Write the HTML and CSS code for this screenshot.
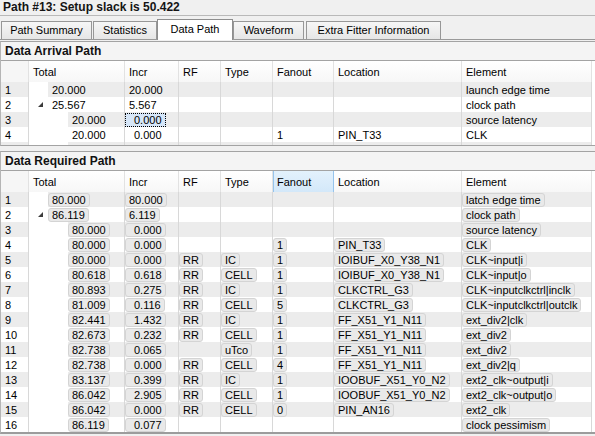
FILE: index.html
```html
<!DOCTYPE html>
<html>
<head>
<meta charset="utf-8">
<title>Path #13</title>
<link rel="stylesheet" href="styles.css">
</head>
<body>
<div class="title">Path #13: Setup slack is 50.422</div>
<div class="tabbar">
  <div class="tab t1">Path Summary</div>
  <div class="tab t2">Statistics</div>
  <div class="tab sel t3">Data Path</div>
  <div class="tab t4">Waveform</div>
  <div class="tab t5">Extra Fitter Information</div>
</div>

<div class="sec s1">
  <div class="shead">Data Arrival Path</div>
  <div class="tbl">
    <div class="row hdr"><div class="c n"></div><div class="c">Total</div><div class="c">Incr</div><div class="c">RF</div><div class="c">Type</div><div class="c">Fanout</div><div class="c">Location</div><div class="c">Element</div><div class="c f"></div></div>
    <div class="row g"><div class="c n">1</div><div class="c t"><i class="ind l0"></i><span class="x">20.000</span></div><div class="c"><span class="x">20.000</span></div><div class="c"></div><div class="c"></div><div class="c"></div><div class="c"></div><div class="c"><span class="x">launch edge time</span></div><div class="c f"></div></div>
    <div class="row"><div class="c n">2</div><div class="c t"><i class="ind l0"><svg class="tri" width="5" height="5" viewBox="0 0 5 5"><polygon points="0,5 5,0 5,5" fill="#3c3c3c"/></svg></i><span class="x">25.567</span></div><div class="c"><span class="x">5.567</span></div><div class="c"></div><div class="c"></div><div class="c"></div><div class="c"></div><div class="c"><span class="x">clock path</span></div><div class="c f"></div></div>
    <div class="row g"><div class="c n">3</div><div class="c t"><i class="ind l1"></i><span class="x">20.000</span></div><div class="c"><span class="fo">0.000</span></div><div class="c"></div><div class="c"></div><div class="c"></div><div class="c"></div><div class="c"><span class="x">source latency</span></div><div class="c f"></div></div>
    <div class="row"><div class="c n">4</div><div class="c t"><i class="ind l1"></i><span class="x">20.000</span></div><div class="c"><span class="x s">0.000</span></div><div class="c"></div><div class="c"></div><div class="c"><span class="x">1</span></div><div class="c"><span class="x">PIN_T33</span></div><div class="c"><span class="x">CLK</span></div><div class="c f"></div></div>
    <div class="row g part"><div class="c n"></div><div class="c t"><i class="ind l1"></i></div><div class="c"></div><div class="c"></div><div class="c"></div><div class="c"></div><div class="c"></div><div class="c"></div><div class="c f"></div></div>
  </div>
</div>

<div class="sec s2">
  <div class="shead">Data Required Path</div>
  <div class="tbl">
    <div class="row hdr"><div class="c n"></div><div class="c">Total</div><div class="c">Incr</div><div class="c">RF</div><div class="c">Type</div><div class="c hot">Fanout</div><div class="c">Location</div><div class="c">Element</div><div class="c f"></div></div>
    <div class="row g"><div class="c n">1</div><div class="c t"><i class="ind l0"></i><span class="k">80.000</span></div><div class="c"><span class="k">80.000</span></div><div class="c"></div><div class="c"></div><div class="c"></div><div class="c"></div><div class="c"><span class="k">latch edge time</span></div><div class="c f"></div></div>
    <div class="row"><div class="c n">2</div><div class="c t"><i class="ind l0"><svg class="tri" width="5" height="5" viewBox="0 0 5 5"><polygon points="0,5 5,0 5,5" fill="#3c3c3c"/></svg></i><span class="k">86.119</span></div><div class="c"><span class="k">6.119</span></div><div class="c"></div><div class="c"></div><div class="c"></div><div class="c"></div><div class="c"><span class="k">clock path</span></div><div class="c f"></div></div>
    <div class="row g"><div class="c n">3</div><div class="c t"><i class="ind l1"></i><span class="k">80.000</span></div><div class="c"><span class="k s">0.000</span></div><div class="c"></div><div class="c"></div><div class="c"></div><div class="c"></div><div class="c"><span class="k">source latency</span></div><div class="c f"></div></div>
    <div class="row"><div class="c n">4</div><div class="c t"><i class="ind l1"></i><span class="k">80.000</span></div><div class="c"><span class="k s">0.000</span></div><div class="c"></div><div class="c"></div><div class="c"><span class="k">1</span></div><div class="c"><span class="k">PIN_T33</span></div><div class="c"><span class="k">CLK</span></div><div class="c f"></div></div>
    <div class="row g"><div class="c n">5</div><div class="c t"><i class="ind l1"></i><span class="k">80.000</span></div><div class="c"><span class="k s">0.000</span></div><div class="c"><span class="k">RR</span></div><div class="c"><span class="k">IC</span></div><div class="c"><span class="k">1</span></div><div class="c"><span class="k">IOIBUF_X0_Y38_N1</span></div><div class="c"><span class="k">CLK~input|i</span></div><div class="c f"></div></div>
    <div class="row"><div class="c n">6</div><div class="c t"><i class="ind l1"></i><span class="k">80.618</span></div><div class="c"><span class="k s">0.618</span></div><div class="c"><span class="k">RR</span></div><div class="c"><span class="k">CELL</span></div><div class="c"><span class="k">1</span></div><div class="c"><span class="k">IOIBUF_X0_Y38_N1</span></div><div class="c"><span class="k">CLK~input|o</span></div><div class="c f"></div></div>
    <div class="row g"><div class="c n">7</div><div class="c t"><i class="ind l1"></i><span class="k">80.893</span></div><div class="c"><span class="k s">0.275</span></div><div class="c"><span class="k">RR</span></div><div class="c"><span class="k">IC</span></div><div class="c"><span class="k">1</span></div><div class="c"><span class="k">CLKCTRL_G3</span></div><div class="c"><span class="k">CLK~inputclkctrl|inclk</span></div><div class="c f"></div></div>
    <div class="row"><div class="c n">8</div><div class="c t"><i class="ind l1"></i><span class="k">81.009</span></div><div class="c"><span class="k s">0.116</span></div><div class="c"><span class="k">RR</span></div><div class="c"><span class="k">CELL</span></div><div class="c"><span class="k">5</span></div><div class="c"><span class="k">CLKCTRL_G3</span></div><div class="c"><span class="k">CLK~inputclkctrl|outclk</span></div><div class="c f"></div></div>
    <div class="row g"><div class="c n">9</div><div class="c t"><i class="ind l1"></i><span class="k">82.441</span></div><div class="c"><span class="k s">1.432</span></div><div class="c"><span class="k">RR</span></div><div class="c"><span class="k">IC</span></div><div class="c"><span class="k">1</span></div><div class="c"><span class="k">FF_X51_Y1_N11</span></div><div class="c"><span class="k">ext_div2|clk</span></div><div class="c f"></div></div>
    <div class="row"><div class="c n">10</div><div class="c t"><i class="ind l1"></i><span class="k">82.673</span></div><div class="c"><span class="k s">0.232</span></div><div class="c"><span class="k">RR</span></div><div class="c"><span class="k">CELL</span></div><div class="c"><span class="k">1</span></div><div class="c"><span class="k">FF_X51_Y1_N11</span></div><div class="c"><span class="k">ext_div2</span></div><div class="c f"></div></div>
    <div class="row g"><div class="c n">11</div><div class="c t"><i class="ind l1"></i><span class="k">82.738</span></div><div class="c"><span class="k s">0.065</span></div><div class="c"></div><div class="c"><span class="k">uTco</span></div><div class="c"><span class="k">1</span></div><div class="c"><span class="k">FF_X51_Y1_N11</span></div><div class="c"><span class="k">ext_div2</span></div><div class="c f"></div></div>
    <div class="row"><div class="c n">12</div><div class="c t"><i class="ind l1"></i><span class="k">82.738</span></div><div class="c"><span class="k s">0.000</span></div><div class="c"><span class="k">RR</span></div><div class="c"><span class="k">CELL</span></div><div class="c"><span class="k">4</span></div><div class="c"><span class="k">FF_X51_Y1_N11</span></div><div class="c"><span class="k">ext_div2|q</span></div><div class="c f"></div></div>
    <div class="row g"><div class="c n">13</div><div class="c t"><i class="ind l1"></i><span class="k">83.137</span></div><div class="c"><span class="k s">0.399</span></div><div class="c"><span class="k">RR</span></div><div class="c"><span class="k">IC</span></div><div class="c"><span class="k">1</span></div><div class="c"><span class="k">IOOBUF_X51_Y0_N2</span></div><div class="c"><span class="k">ext2_clk~output|i</span></div><div class="c f"></div></div>
    <div class="row"><div class="c n">14</div><div class="c t"><i class="ind l1"></i><span class="k">86.042</span></div><div class="c"><span class="k s">2.905</span></div><div class="c"><span class="k">RR</span></div><div class="c"><span class="k">CELL</span></div><div class="c"><span class="k">1</span></div><div class="c"><span class="k">IOOBUF_X51_Y0_N2</span></div><div class="c"><span class="k">ext2_clk~output|o</span></div><div class="c f"></div></div>
    <div class="row g"><div class="c n">15</div><div class="c t"><i class="ind l1"></i><span class="k">86.042</span></div><div class="c"><span class="k s">0.000</span></div><div class="c"><span class="k">RR</span></div><div class="c"><span class="k">CELL</span></div><div class="c"><span class="k">0</span></div><div class="c"><span class="k">PIN_AN16</span></div><div class="c"><span class="k">ext2_clk</span></div><div class="c f"></div></div>
    <div class="row"><div class="c n">16</div><div class="c t"><i class="ind l1"></i><span class="k">86.119</span></div><div class="c"><span class="k s">0.077</span></div><div class="c"></div><div class="c"></div><div class="c"></div><div class="c"></div><div class="c"><span class="k">clock pessimism</span></div><div class="c f"></div></div>
  </div>
</div>
</body>
</html>
```

FILE: styles.css
```css
* { box-sizing: border-box; }
html, body { margin: 0; padding: 0; }
body {
  width: 595px;
  height: 436px;
  overflow: hidden;
  background: #f0f0f0;
  font-family: "Liberation Sans", Arial, sans-serif;
  font-size: 11px;
  color: #000;
}

.title {
  height: 16px;
  line-height: 15px;
  padding-left: 3px;
  font-size: 12px;
  font-weight: bold;
  color: #141414;
  border-bottom: 1px solid #b9b9b9;
}

.tabbar {
  height: 24px;
  display: flex;
  align-items: flex-end;
  border-bottom: 1px solid #9a9a9a;
  padding-left: 1px;
}
.tab {
  height: 18px;
  line-height: 17px;
  text-align: center;
  border: 1px solid #979797;
  border-bottom: none;
  background: linear-gradient(#f6f6f6, #e6e6e6);
  color: #000;
  white-space: nowrap;
}
.t1 { width: 91px; }
.t2 { width: 64px; margin-left: 1px; }
.t3 { width: 76px; }
.t4 { width: 71px; margin-left: 0; }
.t5 { width: 135px; margin-left: 2px; }
.tab.sel {
  height: 21px;
  line-height: 19px;
  margin-bottom: -1px;
  background: #fff;
  border-color: #8e8e8e;
  position: relative;
}

.sec {
  border-top: 1px solid #a3a3a3;
  border-bottom: 1px solid #a3a3a3;
  border-left: 1px solid #b5b5b5;
}
.s1 { margin-top: 1px; }
.s2 { margin-top: 5px; border-bottom: 2px solid #9c9c9c; }
.shead {
  height: 19px;
  line-height: 18px;
  padding-left: 4px;
  font-size: 12px;
  font-weight: bold;
  color: #111;
  background: #f4f4f4;
  border-bottom: 1px solid #a3a3a3;
}

.tbl { background: #fff; }
.row {
  display: grid;
  grid-template-columns: 28px 96px 54px 42px 52px 61px 128px 130px 3px;
  height: 15px;
}
.row.g { background: #ececec; }
.row.part { height: 3px; }
.row.hdr {
  height: 21px;
  background: linear-gradient(#ffffff, #f7f7f7);
}
.c {
  display: flex;
  align-items: center;
  border-right: 1px solid #d8d8d8;
  white-space: nowrap;
  overflow: hidden;
  min-width: 0;
}
.c.f { border-right: none; background: #fff; }
.c.n { padding-left: 4px; }
.hdr .c { padding-left: 4px; border-right-color: #e2e2e2; }
.hdr .c.n { background: #f6f6f6; }
.hdr .c.hot {
  background: linear-gradient(#e3f1fc, #d3e8f9);
  box-shadow: inset 1px 0 0 #96c4ec;
  border-right-color: #96c4ec;
}

.ind {
  display: flex;
  align-items: center;
  align-self: stretch;
  flex: none;
  background: #fff;
}
.ind.l0 { width: 19px; }
.ind.l1 { width: 39px; }
.tri { margin-left: 9px; }

.x {
  padding-left: 4px;
}
.x.s { padding-left: 9px; }

.fo {
  height: 14px;
  line-height: 12px;
  padding: 0 3px 0 8px;
  border: 1px dotted #000;
  background: #d6e6f8;
}

.k {
  height: 14px;
  line-height: 12px;
  padding: 0 3px;
  border: 1px solid #d4d4d4;
  border-radius: 3px;
  background: #e9e9e9;
}
.k.s { padding-left: 8px; }
```
